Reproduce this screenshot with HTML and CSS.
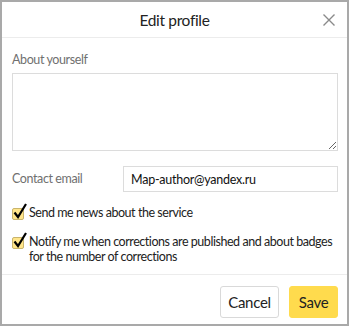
FILE: index.html
```html
<!DOCTYPE html>
<html>
  <head>
    <title>Edit profile</title>
    <link rel="stylesheet" href="styles.css">
  </head>
  <body>
    <div class="dialog">
      <div class="header">
        <span></span>
        <h1>Edit profile</h1>
        <button class="close" aria-label="Close">
          <svg width="12" height="12" viewBox="0 0 12 12">
            <path d="M0.5 0.5 L11.5 11.5 M11.5 0.5 L0.5 11.5" stroke="#8a8a8a" stroke-width="1.4" fill="none"/>
          </svg>
        </button>
      </div>

      <div class="content">
        <label class="field-label" for="about">About yourself</label>
        <textarea id="about" class="about"></textarea>

        <div class="email-row">
          <label class="field-label" for="email">Contact email</label>
          <input id="email" class="email" type="text" value="Map-author@yandex.ru">
        </div>

        <label class="check">
          <span class="box">
            <svg width="16" height="17" viewBox="0 0 16 17">
              <path d="M2.5 9.5 L6 14 L14 1" stroke="#000" stroke-width="2.2" fill="none"/>
            </svg>
          </span>
          <span>Send me news about the service</span>
        </label>

        <label class="check">
          <span class="box">
            <svg width="16" height="17" viewBox="0 0 16 17">
              <path d="M2.5 9.5 L6 14 L14 1" stroke="#000" stroke-width="2.2" fill="none"/>
            </svg>
          </span>
          <span>Notify me when corrections are published and about badges for the number of corrections</span>
        </label>
      </div>

      <div class="footer">
        <button class="btn cancel">Cancel</button>
        <button class="btn save">Save</button>
      </div>
    </div>
  </body>
</html>
```

FILE: styles.css
```css
body {
  margin: 0;
  font-family: Lato, Arial, sans-serif;
  background-color: #fff;
}

.dialog {
  width: 349px;
  height: 326px;
  box-sizing: border-box;
  border: 2px solid #a9a9a9;
  background-color: #fff;
  display: flex;
  flex-direction: column;
}

.header {
  height: 35px;
  border-bottom: 1px solid #ececec;
  display: grid;
  grid-template-columns: 1fr auto 1fr;
  align-items: center;
}

.header h1 {
  margin: 0;
  font-size: 15.5px;
  letter-spacing: -0.35px;
  font-weight: normal;
  color: #222;
}

.close {
  justify-self: end;
  margin-right: 12px;
  padding: 0;
  border: none;
  background: none;
  display: flex;
  margin-top: 1px;
}

.content {
  padding: 14px 9px 0 10px;
  display: flex;
  flex-direction: column;
  flex: 1;
}

.field-label {
  font-size: 12.5px;
  letter-spacing: -0.4px;
  line-height: 16px;
  color: #707070;
}

.about {
  margin-top: 5px;
  height: 78px;
  box-sizing: border-box;
  border: 1px solid #dcdcdc;
  resize: vertical;
  font-family: inherit;
}

.email-row {
  margin-top: 15px;
  display: flex;
  align-items: center;
  justify-content: space-between;
}

.email {
  width: 215px;
  height: 26px;
  box-sizing: border-box;
  border: 1px solid #dcdcdc;
  padding: 0 7px;
  font-family: inherit;
  font-size: 12.5px;
  letter-spacing: -0.25px;
  color: #111;
}

.check {
  display: flex;
  align-items: flex-start;
  gap: 5px;
  font-size: 12.5px;
  letter-spacing: -0.45px;
  line-height: 15px;
  color: #222;
}

.email-row + .check {
  margin-top: 13px;
}

.check + .check {
  margin-top: 14px;
}

.box {
  flex: none;
  position: relative;
  width: 10px;
  height: 10px;
  margin-top: 3px;
  border: 1px solid #c9b46c;
  border-radius: 2px;
  background-color: #ffe58a;
}

.box svg {
  position: absolute;
  left: -1px;
  top: -6px;
}

.footer {
  margin-top: auto;
  border-top: 1px solid #ececec;
  padding: 11px 9px 6px 10px;
  display: flex;
  justify-content: flex-end;
  gap: 10px;
}

.btn {
  height: 32px;
  border-radius: 3px;
  font-family: inherit;
  font-size: 15px;
  letter-spacing: -0.3px;
  color: #222;
  padding: 0;
}

.cancel {
  width: 59px;
  background-color: #fff;
  border: 1px solid #d9d9d9;
}

.save {
  width: 49px;
  background-color: #ffdb4d;
  border: 1px solid #ffdb4d;
}
```
